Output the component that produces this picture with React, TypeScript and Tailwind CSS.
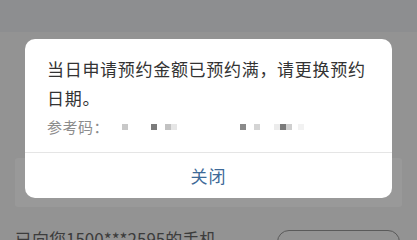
export default function App() {
  return (
    <div
      className="relative w-[417px] h-[240px] overflow-hidden bg-[#939393]"
      style={{ fontFamily: '"Noto Sans CJK SC", "Noto Sans", sans-serif' }}
    >
      {/* page behind the overlay */}
      <div className="h-[32px] bg-[#8d8e90]" />
      <div className="px-[15px] pt-[126px]">
        <div className="h-[49px] rounded-[3px] bg-[#999999]" />
      </div>
      <div className="flex items-start justify-between pl-[15px] pr-[17px] pt-[20px]">
        <span className="text-[17px] leading-[24px] text-[#3c3c3c]">已向您1500***2595的手机</span>
        <div className="mt-[3px] h-[30px] w-[123px] rounded-[12px] border border-[#5a5a5a]" />
      </div>

      {/* dialog */}
      <div className="absolute left-[25px] top-[39px] w-[367px] rounded-[10px] bg-white">
        <div className="px-[22px] pt-[15px] pb-[14px]">
          <p className="text-[17px] leading-[29px] tracking-[0.7px] text-[#333333]">
            当日申请预约金额已预约满，请更换预约日期。
          </p>
          <div className="mt-[4px] flex items-center text-[15px] leading-[22px] text-[#8c8c8c]">
            <span className="tracking-[0.5px]">参考码：</span>
            <div className="ml-[13px] flex items-center">
              <span className="h-[6px] w-[6px] bg-[#c8c8c8]" />
              <span className="ml-[23px] h-[6px] w-[6px] bg-[#7b7b7b]" />
              <span className="ml-[8px] h-[6px] w-[6px] bg-[#c2c2c2]" />
              <span className="h-[6px] w-[6px] bg-[#e6e6e6]" />
              <span className="ml-[63px] h-[6px] w-[6px] bg-[#8a8a8a]" />
              <span className="ml-[8px] h-[6px] w-[6px] bg-[#d4d4d4]" />
              <span className="ml-[14px] h-[6px] w-[6px] bg-[#ececec]" />
              <span className="h-[6px] w-[6px] bg-[#7a7a7a]" />
              <span className="h-[6px] w-[6px] bg-[#cfcfcf]" />
              <span className="ml-[6px] h-[6px] w-[6px] bg-[#f2f2f2]" />
            </div>
          </div>
        </div>
        <div className="h-px bg-[#e5e5e5]" />
        <div className="flex h-[45px] items-center justify-center text-[17px] tracking-[1px] text-[#3e6a98]">
          关闭
        </div>
      </div>
    </div>
  );
}
